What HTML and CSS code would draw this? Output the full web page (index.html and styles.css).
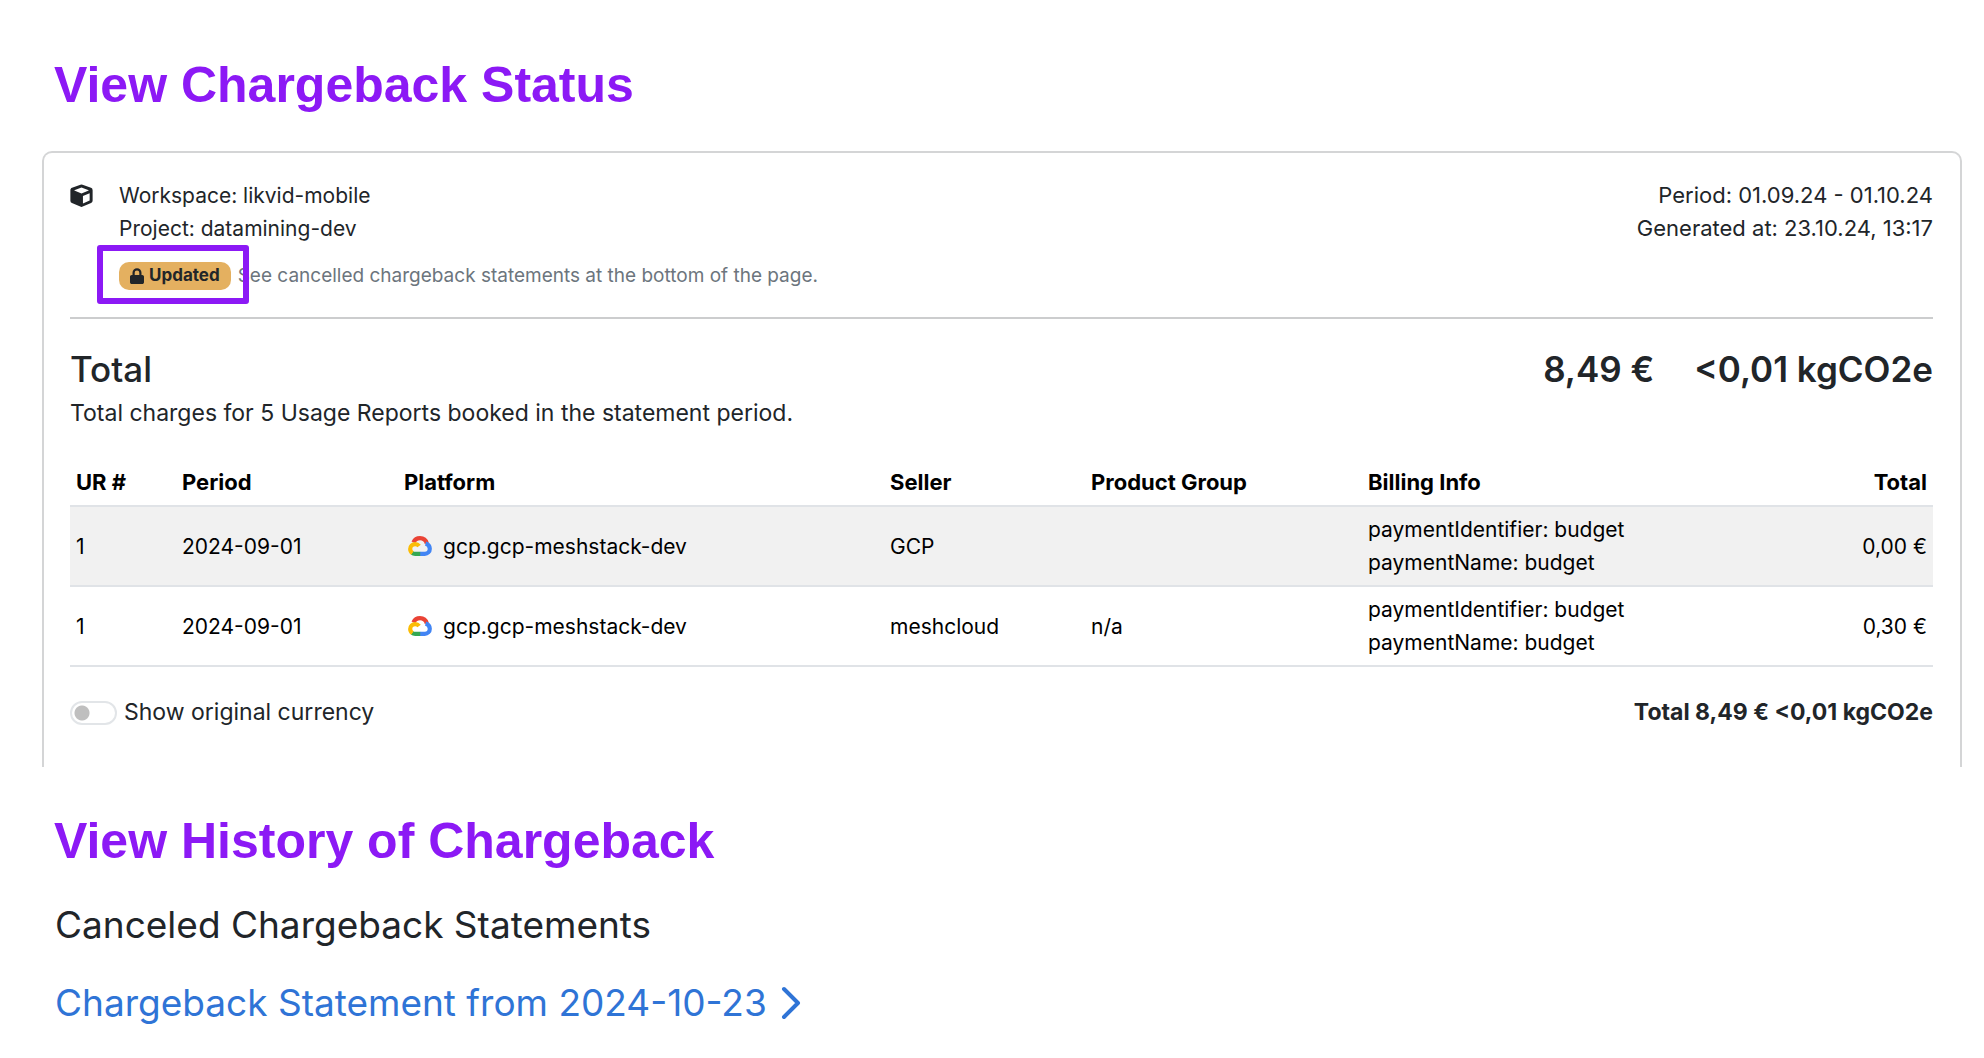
FILE: index.html
```html
<!DOCTYPE html>
<html lang="en">
<head>
<meta charset="utf-8">
<title>Chargeback Statement</title>
<link rel="stylesheet" href="styles.css">
</head>
<body>
<svg class="defs" aria-hidden="true">
  <symbol id="gcp" viewBox="0 0 24 20">
    <g fill="none" stroke-width="4.2">
      <path stroke="#ea4335" d="M5.4 6.4C6.800 3.500 9.200 2.200 12 2.200c3.300 0 5.900 2 6.800 5.200"/>
      <path stroke="#4285f4" d="M17.600 7.400c2.600.8 4.200 2.700 4.200 5.300 0 3-2.200 5.100-5 5.100H12"/>
      <path stroke="#34a853" d="M12.200 17.800H7.200c-1.300 0-2.300-.3-3.200-1"/>
      <path stroke="#fbbc05" d="M4.400 17C2.900 16 2.200 14.500 2.200 12.900c0-2.700 2.200-4.800 5-4.800 1.700 0 3 .7 3.900 1.900"/>
    </g>
  </symbol>
</svg>
<main class="page">
  <section>
    <h1 class="title">View Chargeback Status</h1>
    <article class="card">
      <header class="card-head">
        <svg class="cube" viewBox="0 0 24 24" aria-hidden="true">
          <path fill="#212529" fill-rule="evenodd" d="M10.900.7a3 3 0 0 1 2.200 0l8.800 3.300A2.600 2.600 0 0 1 23.600 6.400v10.900c0 1.100-.6 2.100-1.600 2.600l-8.700 3.700a3.200 3.200 0 0 1-2.600 0L2 19.900A2.800 2.800 0 0 1 .4 17.300V6.400C.4 5.300 1.100 4.400 2.100 4zM12 3.700 4.500 6.500v.2L12 9.800l7.500-3.100v-.2zM13.500 12.600v7.700l7-3.100V9.600z"/>
        </svg>
        <div class="scope">
          <div>Workspace: likvid-mobile</div>
          <div>Project: datamining-dev</div>
          <div class="status">
            <span class="badge">
              <svg class="lock" viewBox="0 0 14 16" aria-hidden="true"><path fill="#212529" fill-rule="evenodd" d="M2.500 7V4.700a4.500 4.500 0 0 1 9 0V7h.7c1 0 1.800.8 1.800 1.800v5.400c0 1-.8 1.800-1.800 1.800H1.800C.8 16 0 15.200 0 14.200V8.800C0 7.800.8 7 1.800 7zm2.200 0h4.600V4.700a2.300 2.300 0 0 0-4.600 0z"/></svg>
              Updated
            </span>
            <span class="hint">See cancelled chargeback statements at the bottom of the page.</span>
            <span class="marker"></span>
          </div>
        </div>
        <div class="dates">
          <div>Period: 01.09.24 - 01.10.24</div>
          <div>Generated at: 23.10.24, 13:17</div>
        </div>
      </header>
      <hr class="rule">
      <div class="total-row">
        <h2 class="total">Total</h2>
        <div class="total sums"><span>8,49 €</span><span>&lt;0,01 kgCO2e</span></div>
      </div>
      <p class="summary">Total charges for 5 Usage Reports booked in the statement period.</p>
      <table class="usage">
        <colgroup><col class="c-ur"><col class="c-period"><col class="c-platform"><col class="c-seller"><col class="c-group"><col class="c-billing"><col></colgroup>
        <thead>
          <tr><th>UR #</th><th>Period</th><th>Platform</th><th>Seller</th><th>Product Group</th><th>Billing Info</th><th class="num">Total</th></tr>
        </thead>
        <tbody>
          <tr>
            <td>1</td><td>2024-09-01</td>
            <td><span class="platform"><svg class="gcp" aria-hidden="true"><use href="#gcp"/></svg>gcp.gcp-meshstack-dev</span></td>
            <td>GCP</td><td></td>
            <td>paymentIdentifier: budget<br>paymentName: budget</td>
            <td class="num">0,00 €</td>
          </tr>
          <tr>
            <td>1</td><td>2024-09-01</td>
            <td><span class="platform"><svg class="gcp" aria-hidden="true"><use href="#gcp"/></svg>gcp.gcp-meshstack-dev</span></td>
            <td>meshcloud</td><td>n/a</td>
            <td>paymentIdentifier: budget<br>paymentName: budget</td>
            <td class="num">0,30 €</td>
          </tr>
        </tbody>
      </table>
      <footer class="card-foot">
        <label class="toggle"><input class="switch" type="checkbox">Show original currency</label>
        <strong class="grand">Total 8,49 € &lt;0,01 kgCO2e</strong>
      </footer>
    </article>
  </section>
  <section class="history">
    <h1 class="title">View History of Chargeback</h1>
    <h2 class="subtitle">Canceled Chargeback Statements</h2>
    <a class="statement" href="#">Chargeback Statement from 2024-10-23
      <svg class="chevron" viewBox="0 0 20 34" aria-hidden="true"><path fill="none" stroke="#2f74d6" stroke-width="4" stroke-linecap="round" stroke-linejoin="round" d="M3 3l14 14L3 31"/></svg>
    </a>
  </section>
</main>
</body>
</html>
```
FILE: styles.css
```css
* { box-sizing: border-box; }
body {
  margin: 0;
  background: #fff;
  color: #212529;
  font: 21px/33px Inter, "Liberation Sans", sans-serif;
}
h1, h2, p { margin: 0; }
.defs { position: absolute; width: 0; height: 0; }
.page { padding: 55px 22px 32px 42px; }
.title {
  padding-left: 12px;
  color: #8c19f5;
  font: bold 50px/60px "Liberation Sans", Arial, sans-serif;
}
.card {
  margin-top: 36px;
  padding: 26px 27px 38px 26px;
  border: 2px solid #d4d5d6;
  border-bottom: 0;
  border-radius: 10px 10px 0 0;
}
.card-head { display: flex; align-items: flex-start; }
.cube { width: 23px; height: 23px; margin: 5px 26px 0 0; }
.dates { margin-left: auto; font-size: 22px; text-align: right; }
.status {
  position: relative;
  display: flex;
  align-items: center;
  gap: 7px;
  margin-top: 14px;
}
.badge {
  display: flex;
  align-items: center;
  gap: 5px;
  height: 28px;
  padding: 0 11px;
  border-radius: 10px;
  background: #e4b060;
  font-size: 17px;
  font-weight: 700;
}
.lock { width: 14px; height: 16px; }
.hint { color: #6c757d; font-size: 19px; }
.marker {
  position: absolute;
  top: -14px;
  left: -22px;
  width: 152px;
  height: 59px;
  border: 6px solid #8c19f5;
  border-radius: 3px;
}
.rule { height: 2px; margin: 25px 0 28px; border: 0; background: #cccdce; }
.total-row { display: flex; justify-content: space-between; }
.total { font-size: 35px; font-weight: 500; line-height: 44px; }
.sums { display: flex; gap: 40px; font-weight: 600; }
.summary, .card-foot { font-size: 23px; }
.summary { margin-top: 6px; }
.usage {
  width: 100%;
  margin-top: 30px;
  border-collapse: collapse;
  table-layout: fixed;
  color: #000;
}
.c-ur { width: 106px; }
.c-period { width: 222px; }
.c-platform { width: 486px; }
.c-seller { width: 201px; }
.c-group { width: 277px; }
.c-billing { width: 400px; }
th, td { padding: 6px; text-align: left; border-bottom: 2px solid #e0e3e7; }
th { font-size: 22px; font-weight: 700; }
.num { text-align: right; }
tbody tr:first-child { background: #f1f1f1; }
.platform { display: flex; align-items: center; gap: 11px; padding-left: 4px; }
.gcp { width: 24px; height: 20px; }
.card-foot { display: flex; justify-content: space-between; margin-top: 29px; }
.toggle { display: flex; align-items: center; gap: 7px; }
.switch {
  appearance: none;
  width: 47px;
  height: 24px;
  margin: 0;
  border: 2px solid #e2e5e8;
  border-radius: 12px;
  background: radial-gradient(circle at 10px 10px, #bfbfbf 7px, transparent 8px);
}
.grand { font-weight: 700; }
.history { margin-top: 44px; }
.subtitle, .statement { font-size: 37px; font-weight: 400; line-height: 48px; }
.subtitle { padding-left: 13px; margin-top: 30px; }
.statement {
  display: inline-flex;
  align-items: center;
  gap: 14px;
  margin-top: 30px;
  padding-left: 13px;
  color: #2f74d6;
  text-decoration: none;
}
.chevron { width: 20px; height: 34px; }
```
